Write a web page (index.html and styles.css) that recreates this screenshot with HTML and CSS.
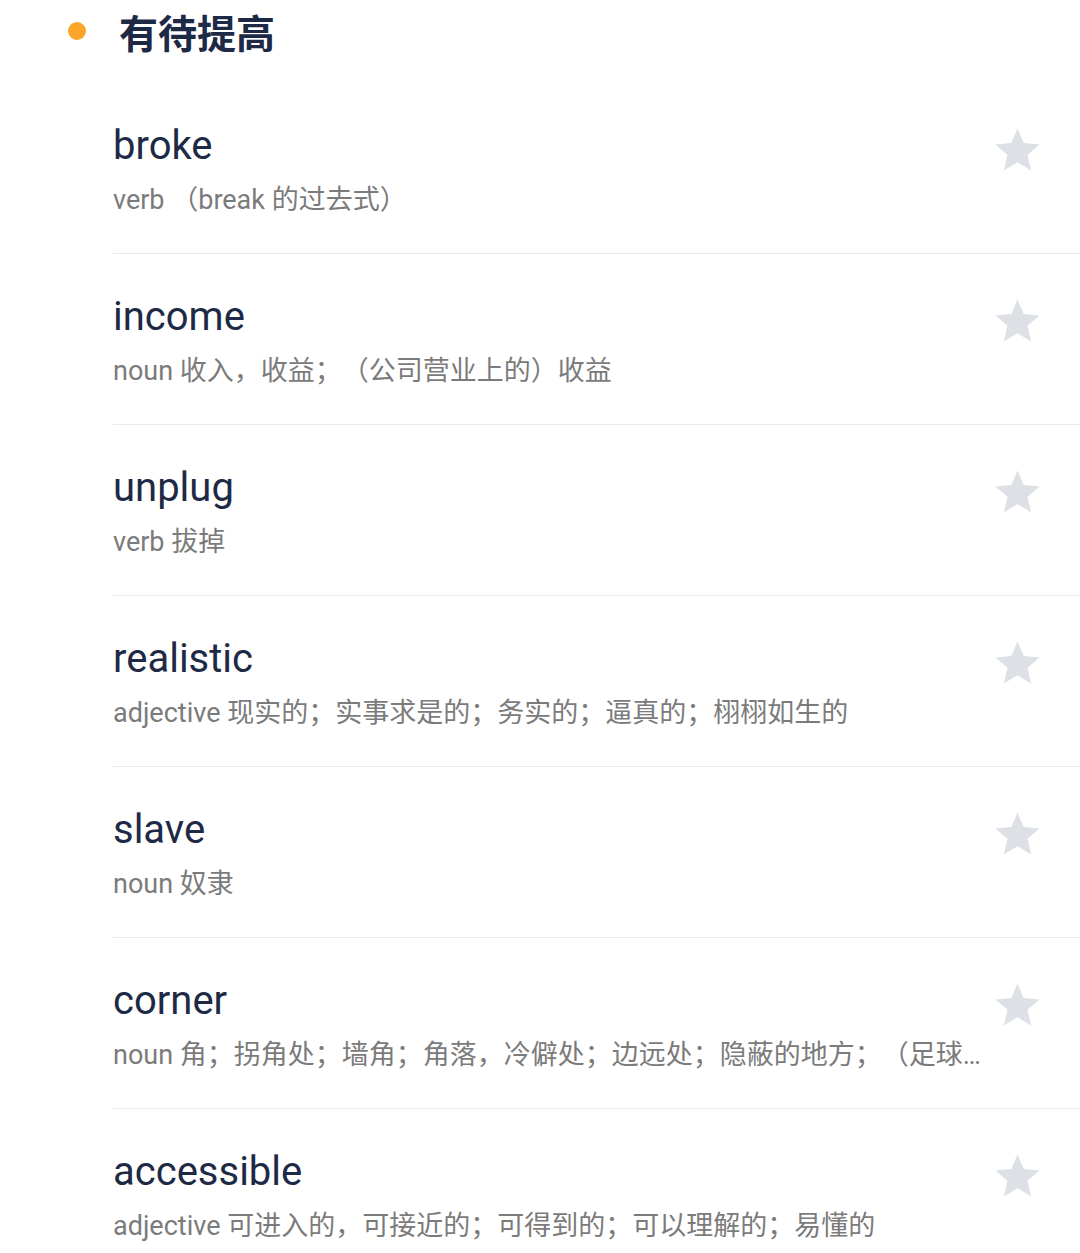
FILE: index.html
```html
<!DOCTYPE html>
<html lang="zh-CN">
<head>
<meta charset="utf-8">
<title>有待提高</title>
<link rel="stylesheet" href="styles.css">
</head>
<body>
<section class="group">
  <header class="group-head">
    <span class="dot"></span>
    <h2 class="group-title">有待提高</h2>
  </header>
  <ul class="word-list">
    <li class="word-row">
      <div class="word-text">
        <div class="word">broke</div>
        <div class="meaning">verb （break 的过去式）</div>
      </div>
      <svg class="star" viewBox="0 0 24 24"><path d="M12 17.27L18.18 21l-1.64-7.03L22 9.24l-7.19-.61L12 2 9.19 8.63 2 9.24l5.46 4.73L5.82 21z"/></svg>
    </li>
    <li class="word-row">
      <div class="word-text">
        <div class="word">income</div>
        <div class="meaning">noun 收入，收益；（公司营业上的）收益</div>
      </div>
      <svg class="star" viewBox="0 0 24 24"><path d="M12 17.27L18.18 21l-1.64-7.03L22 9.24l-7.19-.61L12 2 9.19 8.63 2 9.24l5.46 4.73L5.82 21z"/></svg>
    </li>
    <li class="word-row">
      <div class="word-text">
        <div class="word">unplug</div>
        <div class="meaning">verb 拔掉</div>
      </div>
      <svg class="star" viewBox="0 0 24 24"><path d="M12 17.27L18.18 21l-1.64-7.03L22 9.24l-7.19-.61L12 2 9.19 8.63 2 9.24l5.46 4.73L5.82 21z"/></svg>
    </li>
    <li class="word-row">
      <div class="word-text">
        <div class="word">realistic</div>
        <div class="meaning">adjective 现实的；实事求是的；务实的；逼真的；栩栩如生的</div>
      </div>
      <svg class="star" viewBox="0 0 24 24"><path d="M12 17.27L18.18 21l-1.64-7.03L22 9.24l-7.19-.61L12 2 9.19 8.63 2 9.24l5.46 4.73L5.82 21z"/></svg>
    </li>
    <li class="word-row">
      <div class="word-text">
        <div class="word">slave</div>
        <div class="meaning">noun 奴隶</div>
      </div>
      <svg class="star" viewBox="0 0 24 24"><path d="M12 17.27L18.18 21l-1.64-7.03L22 9.24l-7.19-.61L12 2 9.19 8.63 2 9.24l5.46 4.73L5.82 21z"/></svg>
    </li>
    <li class="word-row">
      <div class="word-text">
        <div class="word">corner</div>
        <div class="meaning">noun 角；拐角处；墙角；角落，冷僻处；边远处；隐蔽的地方；（足球）角球</div>
      </div>
      <svg class="star" viewBox="0 0 24 24"><path d="M12 17.27L18.18 21l-1.64-7.03L22 9.24l-7.19-.61L12 2 9.19 8.63 2 9.24l5.46 4.73L5.82 21z"/></svg>
    </li>
    <li class="word-row">
      <div class="word-text">
        <div class="word">accessible</div>
        <div class="meaning">adjective 可进入的，可接近的；可得到的；可以理解的；易懂的</div>
      </div>
      <svg class="star" viewBox="0 0 24 24"><path d="M12 17.27L18.18 21l-1.64-7.03L22 9.24l-7.19-.61L12 2 9.19 8.63 2 9.24l5.46 4.73L5.82 21z"/></svg>
    </li>
  </ul>
</section>
</body>
</html>
```

FILE: styles.css
```css
html, body {
  margin: 0;
  padding: 0;
  background: #ffffff;
}

body {
  font-family: Roboto, "Noto Sans CJK SC", sans-serif;
  overflow: hidden;
  text-spacing-trim: space-all;
}

.group-head {
  display: flex;
  align-items: center;
  height: 62px;
  padding-left: 68px;
  margin-bottom: 21px;
}

.dot {
  width: 18px;
  height: 18px;
  border-radius: 50%;
  background: #fba52a;
  flex: none;
}

.group-title {
  margin: 0 0 0 33px;
  font-family: "Noto Sans CJK SC", sans-serif;
  font-weight: 700;
  font-size: 39px;
  line-height: 48px;
  color: #1e2a45;
}

.word-list {
  list-style: none;
  margin: 0 0 0 113px;
  padding: 0;
}

.word-row {
  display: flex;
  align-items: flex-start;
  height: 170px;
  box-sizing: content-box;
  border-bottom: 1px solid #e6e9ef;
  padding-right: 36px;
}

.word-text {
  flex: 1;
  min-width: 0;
  padding-top: 40px;
  padding-right: 4px;
}

.word {
  font-size: 40px;
  line-height: 46px;
  color: #1e2a45;
}

.meaning {
  margin-top: 13px;
  font-size: 27px;
  line-height: 36px;
  color: #7b7b7b;
  white-space: nowrap;
  overflow: hidden;
  text-overflow: ellipsis;
}

.star {
  flex: none;
  width: 53px;
  height: 53px;
  margin-top: 41px;
  fill: #dde1e6;
}
```
